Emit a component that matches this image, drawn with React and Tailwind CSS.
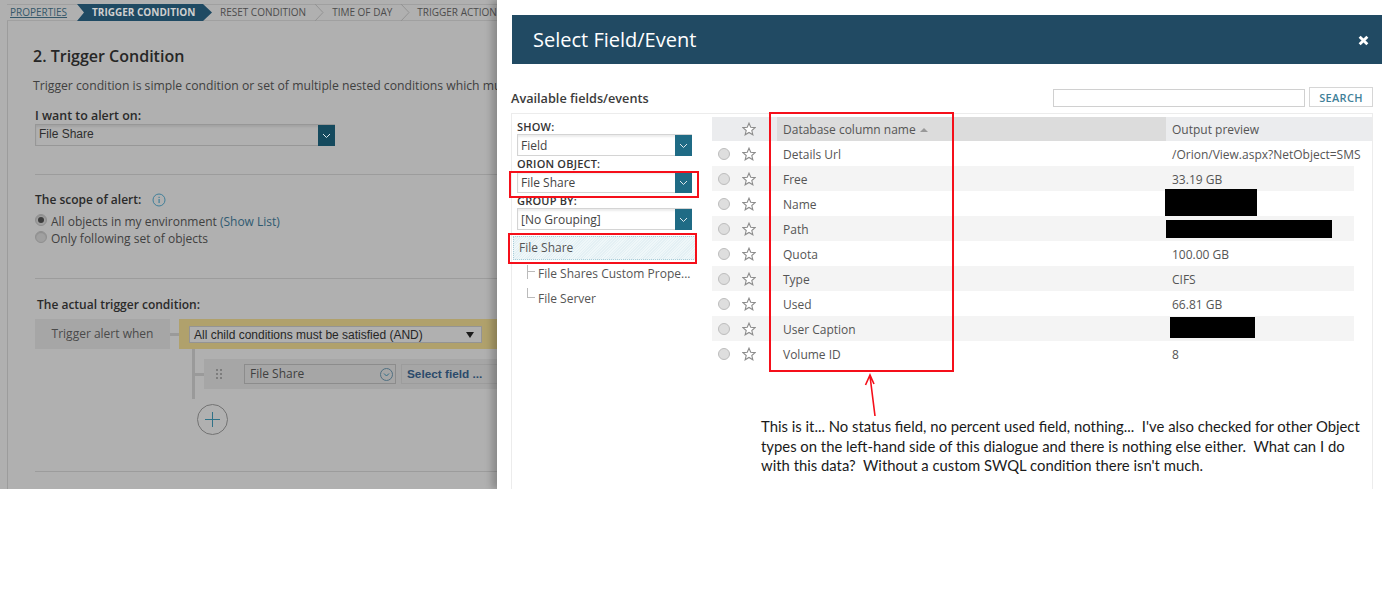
const Star = () => (
  <svg width="14" height="14" viewBox="0 0 24 24" fill="#fff" stroke="#8c8c8c" strokeWidth="1.9" strokeLinejoin="miter">
    <polygon points="12,2 15,9 22.5,9.6 16.8,14.6 18.6,22 12,18 5.4,22 7.2,14.6 1.5,9.6 9,9" />
  </svg>
);
const Chevron = ({ fill = "none", stroke = "#939393" }) => (
  <svg width="10" height="17" viewBox="0 0 10 17" className="shrink-0"><polyline points="1,0 9,8.5 1,17" fill={fill} stroke={stroke} /></svg>
);
const Caret = () => (
  <svg width="9" height="6" viewBox="0 0 9 6"><polyline points="1,1 4.5,4.5 8,1" fill="none" stroke="#dfe8ec" strokeWidth="1" /></svg>
);
const ModalSelect = ({ label, value, mt }) => (
  <div className={mt}>
    <div className="text-[11px] leading-[14px] font-semibold text-[#333] tracking-[0.2px] h-[14px]">{label}</div>
    <div className="flex h-[22px] w-[175px] border border-[#d4d4d4] border-r-0 shadow-[inset_0_2px_2px_rgba(0,0,0,0.08)]">
      <div className="flex-1 pl-[3px] text-[12px] leading-[22px] text-[#444]">{value}</div>
      <div className="w-[17px] h-[21px] bg-[#1f6b85] flex items-center justify-center"><Caret /></div>
    </div>
  </div>
);
const rows = [
  ["Details Url", "/Orion/View.aspx?NetObject=SMS"],
  ["Free", "33.19 GB"],
  ["Name", ""],
  ["Path", ""],
  ["Quota", "100.00 GB"],
  ["Type", "CIFS"],
  ["Used", "66.81 GB"],
  ["User Caption", ""],
  ["Volume ID", "8"],
];
const redact = {
  Name: "w-[92px] h-[27px] left-[-1px] top-[-2px]",
  Path: "w-[166px] h-[18px] left-[0px] top-[4px]",
  "User Caption": "w-[85px] h-[21px] left-[4px] top-[1px]",
};
const Crumb = ({ children, className = "" }) => (
  <span className={"text-[10px] leading-[15px] whitespace-nowrap text-[#4c4c4c] " + className}>{children}</span>
);

export default function App() {
  return (
    <div className="h-[600px] bg-white overflow-hidden" style={{ fontFamily: "'Open Sans', sans-serif" }}>
      <div className="flex h-[489px] overflow-hidden">
        {/* background page */}
        <div className="w-[497px] shrink-0 bg-[#b0b0b0] overflow-hidden pt-1">
          <div className="flex items-center h-[17px] ml-[7px] border-y border-[#a0a0a0] w-[600px]">
            <Crumb className="ml-[3px] underline text-[#35586a] w-[60px] shrink-0">PROPERTIES</Crumb>
            <div className="ml-[7px] shrink-0 flex items-center h-[17px] bg-[#1f4a63] pl-[15px] w-[135px] [clip-path:polygon(0_0,126px_0,135px_50%,126px_100%,0_100%,7px_50%)]">
              <Crumb className="font-bold text-[#cfcfcf]">TRIGGER CONDITION</Crumb>
            </div>
            <Crumb className="ml-[8px]">RESET CONDITION</Crumb>
            <div className="ml-[8px]"><Chevron /></div>
            <Crumb className="ml-[8px]">TIME OF DAY</Crumb>
            <div className="ml-[8px]"><Chevron /></div>
            <Crumb className="ml-[7px]">TRIGGER ACTIONS</Crumb>
          </div>
          <div className="ml-[7px] border-l border-[#9c9c9c] pl-[27px] pt-[24px] h-[470px]">
            <h2 className="text-[16px] leading-[22px] font-semibold text-[#262626] whitespace-nowrap ml-[-2px]">2. Trigger Condition</h2>
            <p className="mt-[10px] text-[12.2px] leading-[18px] text-[#404040] whitespace-nowrap ml-[-2px]">Trigger condition is simple condition or set of multiple nested conditions which mus</p>
            <div className="mt-[13px] text-[12.4px] leading-[16px] font-semibold text-[#2a2a2a]">I want to alert on:</div>
            <div className="flex w-[300px] h-[22px] border border-[#979797] border-r-0 shadow-[inset_0_2px_2px_rgba(0,0,0,0.08)]">
              <div className="flex-1 pl-[3px] text-[12px] leading-[19px] text-[#2e2e2e]" style={{ fontFamily: "'Liberation Sans', sans-serif" }}>File Share</div>
              <div className="w-[17px] h-[21px] bg-[#154a5e] flex items-center justify-center"><Caret /></div>
            </div>
            <div className="mt-[28px] border-t border-[#9c9c9c]" />
            <div className="mt-[17px] flex items-center h-[16px] text-[12px] font-semibold text-[#2a2a2a]">
              The scope of alert:
              <svg width="14" height="14" viewBox="0 0 14 14" className="ml-[11px]"><circle cx="7" cy="7" r="6" fill="none" stroke="#3f7f99" /><rect x="6.5" y="6" width="1.2" height="4" fill="#3f7f99" /><rect x="6.5" y="3.8" width="1.2" height="1.2" fill="#3f7f99" /></svg>
            </div>
            <div className="mt-[5px] flex items-center h-[17px] text-[12px] text-[#404040]">
              <span className="w-[12px] h-[12px] mt-[-3px] rounded-full bg-[#a0a0a0] border border-[#8f8f8f] shadow-[inset_0_1px_1px_rgba(0,0,0,0.12)] flex items-center justify-center mr-[4px]"><span className="w-[6px] h-[6px] rounded-full bg-[#3c3c3c]" /></span>
              All objects in my environment&nbsp;<span className="text-[#2f5a70]">(Show List)</span>
            </div>
            <div className="flex items-center h-[17px] text-[12px] text-[#404040]">
              <span className="w-[12px] h-[12px] mt-[-3px] rounded-full bg-[#a0a0a0] border border-[#8f8f8f] shadow-[inset_0_1px_1px_rgba(0,0,0,0.12)] mr-[4px]" />
              Only following set of objects
            </div>
            <div className="mt-[31px] border-t border-[#9c9c9c]" />
            <div className="mt-[18px] ml-[2px] text-[12px] leading-[16px] font-semibold text-[#2a2a2a]">The actual trigger condition:</div>
            <div className="mt-[6px] flex h-[30px] items-center">
              <div className="w-[135px] h-[30px] shrink-0 bg-[#a6a6a6] text-center text-[12px] leading-[30px] text-[#4a4a4a]">Trigger alert when</div>
              <div className="w-[9px] h-[3px] shrink-0 bg-[#9a9a9a]" />
              <div className="w-[400px] h-[30px] shrink-0 bg-[#b0a16c] pl-[10px] pt-[7px]">
                <div className="w-[293px] h-[17px] bg-[#b0b0b0] border border-[#949494] flex justify-between items-center pl-[4px] pr-[7px] text-[12px] text-[#262626]" style={{ fontFamily: "'Liberation Sans', sans-serif" }}>
                  All child conditions must be satisfied (AND)
                  <span className="w-0 h-0 border-x-[4px] border-x-transparent border-t-[6px] border-t-[#1c1c1c]" />
                </div>
              </div>
            </div>
            <div className="ml-[157px] flex h-[50px]">
              <div className="w-[3px] shrink-0 bg-[#9a9a9a]" />
              <div className="mt-[10px] h-[30px] flex items-center">
                <div className="w-[9px] h-[3px] shrink-0 bg-[#9a9a9a]" />
                <div className="w-[400px] h-[30px] shrink-0 bg-[#a6a6a6] flex items-center">
                  <div className="ml-[12px] w-[6px] grid grid-cols-2 gap-x-[2px] gap-y-[2px]">
                    {[0,1,2,3,4,5].map(i => <span key={i} className="w-[2px] h-[2px] bg-[#7d7d7d]" />)}
                  </div>
                  <div className="ml-[22px] w-[152px] h-[20px] shrink-0 border border-[#8c8c8c] flex justify-between items-center pl-[5px] pr-[2px] text-[12px] text-[#404040]">
                    File Share
                    <svg width="13" height="13" viewBox="0 0 13 13"><circle cx="6.5" cy="6.5" r="6" fill="none" stroke="#4f6f80" /><polyline points="4,5.5 6.5,8 9,5.5" fill="none" stroke="#2f6f8a" /></svg>
                  </div>
                  <div className="ml-[5px] w-[120px] h-[20px] shrink-0 border border-[#9c9c9c] pl-[5px] text-[11.8px] leading-[18px] font-bold text-[#2b4a6b] whitespace-nowrap" style={{ fontFamily: "'Liberation Sans', sans-serif" }}>Select field ...</div>
                </div>
              </div>
            </div>
            <div className="ml-[162px] mt-[5px] w-[31px] h-[31px] rounded-full border border-[#737373] flex items-center justify-center">
              <svg width="15" height="15" viewBox="0 0 15 15"><path d="M7.5 0v15M0 7.5h15" stroke="#2f7288" strokeWidth="1" /></svg>
            </div>
            <div className="mt-[36px] border-t border-[#9c9c9c]" />
          </div>
        </div>

        {/* modal */}
        <div className="relative flex-1 bg-white pl-[15px] pr-[2px] pt-[15px] shadow-[-5px_0_7px_rgba(0,0,0,0.22)]">
          <div className="h-[49px] bg-[#214a63] flex items-center justify-between pl-[21px] pr-[13px]">
            <span className="text-[20px] text-white">Select Field/Event</span>
            <svg width="11" height="11" viewBox="0 0 10 10" className="mt-[2px]"><path d="M1.5 1.5l7 7M8.5 1.5l-7 7" stroke="#fff" strokeWidth="2.6" /></svg>
          </div>
          <div className="mt-[23px] flex items-center justify-between h-[20px] pr-[9px]">
            <span className="text-[12.7px] font-semibold text-[#3a3a3a] ml-[-1px] mt-[4px]">Available fields/events</span>
            <div className="flex items-center gap-[4px]">
              <div className="w-[252px] h-[18px] mt-[1px] border border-[#d0d0d0]" />
              <div className="w-[64px] h-[20px] border border-[#d6d6d6] text-center text-[11px] leading-[19px] font-semibold text-[#3f7f99] tracking-[0.3px]">SEARCH</div>
            </div>
          </div>
          <div className="mt-[6px] ml-[-1px] mr-[9px] border border-[#ececec] flex h-[400px]">
            <div className="w-[200px] shrink-0 pt-[6px]">
              <div className="pl-[5px]">
                <ModalSelect label="SHOW:" value="Field" />
                <ModalSelect label="ORION OBJECT:" value="File Share" mt="mt-[1px]" />
                <ModalSelect label="GROUP BY:" value="[No Grouping]" mt="mt-[1px]" />
              </div>
              <div className="mt-[6px] ml-[1px] w-[183px] h-[24px] border border-dotted border-[#a9cdd9] pl-[5px] text-[12px] leading-[22px] text-[#555] bg-[repeating-linear-gradient(135deg,#e4f0f4_0,#e4f0f4_1px,#eff7f9_1px,#eff7f9_2px)]">File Share</div>
              <div className="relative mt-[1px] pl-[26px] text-[12px] leading-[25px] text-[#555]">
                <div className="whitespace-nowrap">File Shares Custom Prope...</div>
                <div>File Server</div>
                <div className="absolute left-[15px] top-[4px] w-px h-[14px] bg-[#bbb]" />
                <div className="absolute left-[15px] top-[10px] w-[8px] h-px bg-[#bbb]" />
                <div className="absolute left-[15px] top-[27px] w-[8px] h-[10px] border-l border-b border-[#bbb]" />
              </div>
            </div>
            <div className="flex-1 pt-[3px] text-[12px] text-[#555]">
              <div className="flex h-[24px] bg-[#ebecee] items-center leading-[24px]">
                <div className="w-[65px] shrink-0 pl-[30px] flex items-center"><Star /></div>
                <div className="w-[389px] shrink-0 h-full bg-[#dcdcdc] pl-[6px] pt-[2px] flex items-center">Database column name
                  <span className="ml-[4px] w-0 h-0 border-x-[4px] border-x-transparent border-b-[4px] border-b-[#999]" />
                </div>
                <div className="pl-[6px] pt-[2px]">Output preview</div>
              </div>
              {rows.map((r, i) => (
                <div key={r[0]} className={"flex h-[25px] items-center w-[642px] " + (i % 2 === 1 ? "bg-[#f4f4f4]" : "")}>
                  <div className="w-[65px] shrink-0 pl-[6px] flex items-center gap-[12px]">
                    <span className="w-[12px] h-[12px] rounded-full bg-[#dedede] border border-[#bdbdbd]" />
                    <Star />
                  </div>
                  <div className="w-[389px] shrink-0 pl-[6px] pt-[2px]">{r[0]}</div>
                  <div className="relative self-stretch flex items-center pl-[6px] pt-[2px] whitespace-nowrap">
                    {r[1]}
                    {redact[r[0]] && <span className={"absolute bg-black block " + redact[r[0]]} />}
                  </div>
                </div>
              ))}
            </div>
          </div>
          {/* annotations */}
          <div className="absolute left-[12px] top-[171px] w-[190px] h-[27px] border-2 border-[#f50f1a]" />
          <div className="absolute left-[11px] top-[233px] w-[189px] h-[31px] border-2 border-[#f50f1a]" />
          <div className="absolute left-[272px] top-[112px] w-[185px] h-[260px] border-2 border-[#f50f1a]" />
          <svg className="absolute left-[365px] top-[372px]" width="16" height="46" viewBox="0 0 16 46">
            <path d="M13 44L8 4M3.5 13L8 3L12 12" fill="none" stroke="#f50f1a" strokeWidth="1.6" />
          </svg>
          <div className="absolute left-[264px] top-[417px] w-[620px] text-[14.85px] leading-[19.6px] text-[#1a1a1a]" style={{ fontFamily: "Lato, sans-serif" }}>
            <div className="whitespace-pre">This is it... No status field, no percent used field, nothing...  I've also checked for other Object</div>
            <div className="whitespace-pre">types on the left-hand side of this dialogue and there is nothing else either.  What can I do</div>
            <div className="whitespace-pre">with this data?  Without a custom SWQL condition there isn't much.</div>
          </div>
        </div>
      </div>
    </div>
  );
}
